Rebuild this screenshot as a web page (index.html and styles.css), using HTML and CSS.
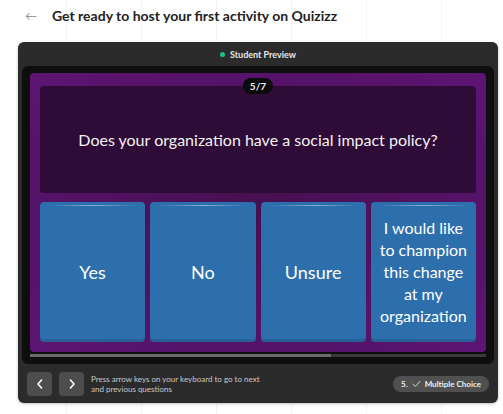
FILE: index.html
```html
<!DOCTYPE html>
<html>

<head>
    <meta charset="UTF-8">
    <title>Host your first activity</title>
    <link rel="stylesheet" href="styles.css">
</head>

<body>
    <div class="header">
        <span class="back">&#8592;</span>
        <h1 class="title">Get ready to host your first activity on Quizizz</h1>
    </div>

    <div class="panel">
        <div class="panel-top">
            <span class="dot"></span>
            <span>Student Preview</span>
        </div>

        <div class="screen">
            <div class="stage">
                <span class="counter">5/7</span>
                <div class="question">Does your organization have a social impact policy?</div>
                <div class="options">
                    <div class="option">Yes</div>
                    <div class="option">No</div>
                    <div class="option">Unsure</div>
                    <div class="option option-long">I would like to champion this change at my organization</div>
                </div>
            </div>
            <div class="progress">
                <div class="progress-fill" style="width: 66%"></div>
            </div>
        </div>

        <div class="panel-bottom">
            <button class="nav-button">
                <svg width="10" height="12" viewBox="0 0 10 12"><path d="M6.5 2 L3 6 L6.5 10" fill="none" stroke="#fff" stroke-width="1.6" stroke-linecap="round" stroke-linejoin="round"/></svg>
            </button>
            <button class="nav-button">
                <svg width="10" height="12" viewBox="0 0 10 12"><path d="M3.5 2 L7 6 L3.5 10" fill="none" stroke="#fff" stroke-width="1.6" stroke-linecap="round" stroke-linejoin="round"/></svg>
            </button>
            <p class="hint">Press arrow keys on your keyboard to go to next<br>and previous questions</p>
            <div class="type-pill">
                <span>5.</span>
                <svg width="9" height="8" viewBox="0 0 9 8"><path d="M1 4.2 L3.3 6.4 L8 1.4" fill="none" stroke="#ddd" stroke-width="1" stroke-linecap="round" stroke-linejoin="round"/></svg>
                <span>Multiple Choice</span>
            </div>
        </div>
    </div>
</body>

</html>
```

FILE: styles.css
```css
body {
    font-family: Lato, "Open Sans", Arial, sans-serif;
    margin: 0;
    padding: 0;
    background-color: #fff;
    background-image: linear-gradient(90deg, #f4f4f4 1px, transparent 1px);
    background-size: 75px 100%;
    background-position: 66px 0;
    height: 414px;
    overflow: hidden;
}

.header {
    display: flex;
    align-items: center;
    height: 30px;
    padding-left: 25px;
}

.back {
    color: #888;
    font-size: 12px;
    width: 27px;
}

.title {
    margin: 0;
    font-size: 14px;
    font-weight: 700;
    color: #222;
}

.panel {
    margin: 12px 0 0 18px;
    width: 480px;
    background: #2b2b2b;
    border-radius: 6px;
    box-shadow: 0 1px 3px rgba(0, 0, 0, 0.25);
}

.panel-top {
    height: 24px;
    display: flex;
    align-items: center;
    justify-content: center;
    gap: 5px;
    color: #e8e8e8;
    font-size: 9px;
    font-weight: 700;
}

.dot {
    width: 5px;
    height: 5px;
    border-radius: 50%;
    background: #1ec28b;
}

.screen {
    margin: 0 4px;
    background: #0e0e0e;
    border-radius: 6px;
    padding: 7px 8px;
}

.stage {
    position: relative;
    height: 279px;
    box-sizing: border-box;
    padding: 13px 10px 10px;
    border-radius: 4px;
    background: radial-gradient(ellipse at center, #46104f 0%, #56136a 70%, #5e1574 100%);
    display: flex;
    flex-direction: column;
    gap: 9px;
}

.counter {
    position: absolute;
    top: 5px;
    left: 50%;
    transform: translateX(-50%);
    background: #0b0b0b;
    color: #eee;
    font-size: 10px;
    font-weight: 700;
    padding: 2px 7px;
    border-radius: 9px;
    line-height: 12px;
    z-index: 1;
}

.question {
    height: 107px;
    background: #2f0b38;
    border-radius: 4px;
    display: flex;
    align-items: center;
    justify-content: center;
    color: #f2f2f2;
    font-size: 16px;
}

.options {
    flex: 1;
    display: grid;
    grid-template-columns: repeat(4, 1fr);
    gap: 5px;
}

.option {
    position: relative;
    background: #2d6fad;
    border-radius: 4px;
    box-shadow: inset 0 -3px 0 rgba(0, 0, 0, 0.12);
    display: flex;
    align-items: center;
    justify-content: center;
    text-align: center;
    color: #fff;
    font-size: 18px;
}

.option::before {
    content: "";
    position: absolute;
    top: 3px;
    left: 8px;
    right: 8px;
    height: 1px;
    background: linear-gradient(90deg, transparent, rgba(255, 255, 255, 0.45), transparent);
}

.option-long {
    font-size: 16px;
    line-height: 22px;
    padding: 0 4px;
}

.progress {
    margin-top: 2px;
    height: 3px;
    background: #3a3a3a;
}

.progress-fill {
    height: 100%;
    background: #6a6a6a;
}

.panel-bottom {
    display: flex;
    align-items: center;
    padding: 8px 9px 7px 9px;
    gap: 7px;
}

.nav-button {
    width: 25px;
    height: 24px;
    border: none;
    border-radius: 4px;
    background: #4d4d4d;
    padding: 0;
    display: flex;
    align-items: center;
    justify-content: center;
}

.hint {
    margin: 0;
    color: #c9c9c9;
    font-size: 8px;
    line-height: 10px;
    flex: 1;
}

.type-pill {
    display: flex;
    align-items: center;
    gap: 4px;
    background: #505050;
    color: #eee;
    font-size: 8px;
    font-weight: 700;
    padding: 0 8px;
    height: 16px;
    border-radius: 8px;
}
```
